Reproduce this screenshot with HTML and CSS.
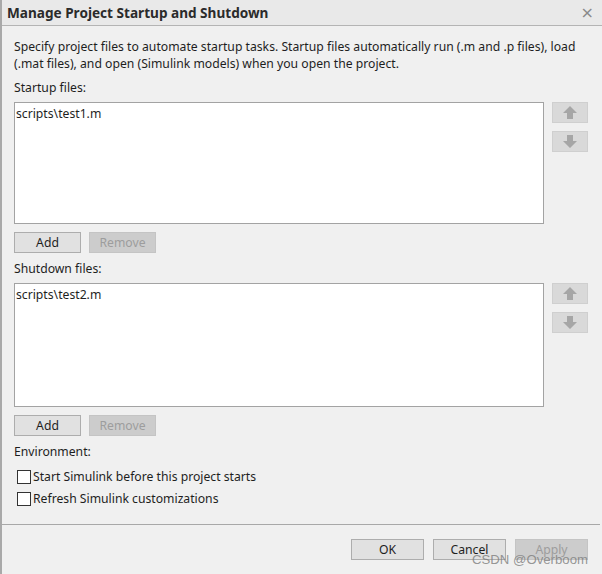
FILE: index.html
```html
<!DOCTYPE html>
<html>
<head>
<meta charset="utf-8">
<link rel="stylesheet" href="styles.css">
</head>
<body>
<div class="dialog">
  <div class="titlebar">
    <span class="title">Manage Project Startup and Shutdown</span>
    <span class="close">×</span>
  </div>
  <div class="content">
    <p class="desc">Specify project files to automate startup tasks. Startup files automatically run (.m and .p files), load (.mat files), and open (Simulink models) when you open the project.</p>
    <div class="label">Startup files:</div>
    <div class="files">
      <div class="list list1"><div class="item">scripts\test1.m</div></div>
      <div class="arrows">
        <div class="arrow"><svg width="36" height="21" viewBox="0 0 36 21"><path d="M18 4 L25 11 L21 11 L21 17 L15 17 L15 11 L11 11 Z" fill="#a6a6a6"/></svg></div>
        <div class="arrow"><svg width="36" height="21" viewBox="0 0 36 21"><path d="M18 17 L25 10 L21 10 L21 4 L15 4 L15 10 L11 10 Z" fill="#a6a6a6"/></svg></div>
      </div>
    </div>
    <div class="btnrow">
      <button class="btn">Add</button>
      <button class="btn disabled">Remove</button>
    </div>
    <div class="label">Shutdown files:</div>
    <div class="files">
      <div class="list list2"><div class="item">scripts\test2.m</div></div>
      <div class="arrows">
        <div class="arrow"><svg width="36" height="21" viewBox="0 0 36 21"><path d="M18 4 L25 11 L21 11 L21 17 L15 17 L15 11 L11 11 Z" fill="#a6a6a6"/></svg></div>
        <div class="arrow"><svg width="36" height="21" viewBox="0 0 36 21"><path d="M18 17 L25 10 L21 10 L21 4 L15 4 L15 10 L11 10 Z" fill="#a6a6a6"/></svg></div>
      </div>
    </div>
    <div class="btnrow">
      <button class="btn">Add</button>
      <button class="btn disabled">Remove</button>
    </div>
    <div class="label env">Environment:</div>
    <div class="checks">
      <label class="check"><span class="box"></span>Start Simulink before this project starts</label>
      <label class="check"><span class="box"></span>Refresh Simulink customizations</label>
    </div>
  </div>
  <div class="footer">
    <button class="btn wide">OK</button>
    <button class="btn wide">Cancel</button>
    <button class="btn wide disabled">Apply</button>
    <span class="watermark">CSDN @Overboom</span>
  </div>
</div>
</body>
</html>
```
FILE: styles.css
```css
* { box-sizing: border-box; }
html, body {
  margin: 0;
  padding: 0;
  background: #f0f0f0;
}
body {
  width: 602px;
  height: 574px;
  overflow: hidden;
  font-family: "Noto Sans", "Open Sans", sans-serif;
  font-size: 12.2px;
  color: #1e1e1e;
}
.dialog {
  width: 602px;
  height: 574px;
  border-left: 2px solid #a9a9a9;
  display: flex;
  flex-direction: column;
  position: relative;
}
.titlebar {
  height: 26px;
  flex: none;
  background: #e9e9e9;
  border-bottom: 1px solid #b4b4b4;
  display: flex;
  align-items: center;
  justify-content: space-between;
  padding: 0 8px 0 5px;
}
.title {
  font-weight: bold;
  font-size: 13.6px;
  color: #2b2b2b;
}
.close {
  font-size: 16px;
  color: #8a8a8a;
  font-family: "DejaVu Sans", sans-serif;
}
.content {
  flex: 1;
  padding: 12px 0 0 12px;
}
.desc {
  margin: 0;
  line-height: 17px;
  width: 580px;
}
.label {
  margin-top: 7px;
  line-height: 17px;
}
.files {
  margin-top: 6px;
  display: flex;
  gap: 8px;
}
.list {
  width: 530px;
  background: #fff;
  border: 1px solid #a3a3a3;
  padding: 2px 1px;
}
.list1 { height: 122px; }
.list2 { height: 124px; }
.item { line-height: 17px; }
.arrows {
  display: flex;
  flex-direction: column;
  gap: 8px;
}
.arrow {
  width: 36px;
  height: 21px;
  background: #d9d9d9;
  border: 1px solid #cfcfcf;
  display: flex;
}
.arrow svg { margin: -1px; }
.btnrow {
  margin-top: 8px;
  display: flex;
  gap: 8px;
}
.btn {
  font: inherit;
  width: 67px;
  height: 21px;
  padding: 0;
  background: #e1e1e1;
  border: 1px solid #adadad;
  color: #1e1e1e;
  line-height: 19px;
}
.btn.disabled {
  background: #cccccc;
  border-color: #c4c4c4;
  color: #9d9d9d;
}
.env { margin-top: 7px; }
.checks {
  margin-top: 8px;
  display: flex;
  flex-direction: column;
  gap: 4px;
  padding-left: 3px;
}
.check {
  display: flex;
  align-items: center;
  gap: 2px;
  line-height: 18px;
}
.box {
  width: 14px;
  height: 14px;
  background: #fff;
  border: 1px solid #333;
}
.footer {
  height: 50px;
  flex: none;
  border-top: 1px solid #a8a8a8;
  margin-right: 2px;
  display: flex;
  justify-content: flex-end;
  gap: 9px;
  padding: 14px 12px 0 0;
}
.btn.wide { width: 73px; }
.watermark {
  position: absolute;
  right: 14px;
  bottom: 7px;
  font-family: "Liberation Sans", sans-serif;
  font-size: 13.2px;
  color: rgba(125, 125, 125, 0.8);
}
```
